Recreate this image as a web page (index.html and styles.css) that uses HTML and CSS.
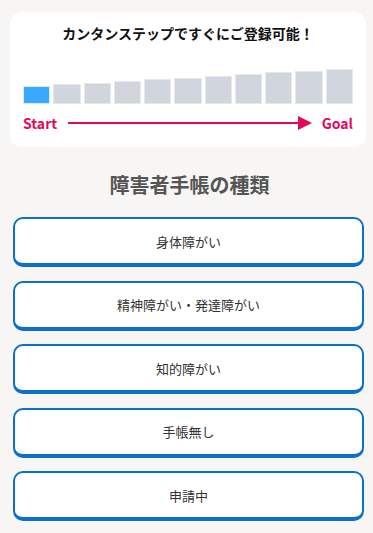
FILE: index.html
```html
<!DOCTYPE html>
<html lang="ja">
<head>
    <meta charset="UTF-8">
    <meta name="viewport" content="width=device-width, initial-scale=1.0">
    <title>障害者手帳の種類</title>
    <link rel="stylesheet" href="styles.css">
</head>
<body>
    <div class="page">
        <div class="steps">
            <p class="steps-title">カンタンステップですぐにご登録可能！</p>
            <div class="bars">
                <span class="bar active" style="height: 18px"></span>
                <span class="bar" style="height: 19.7px"></span>
                <span class="bar" style="height: 21.4px"></span>
                <span class="bar" style="height: 23.1px"></span>
                <span class="bar" style="height: 24.8px"></span>
                <span class="bar" style="height: 26.5px"></span>
                <span class="bar" style="height: 28.2px"></span>
                <span class="bar" style="height: 29.9px"></span>
                <span class="bar" style="height: 31.6px"></span>
                <span class="bar" style="height: 33.3px"></span>
                <span class="bar" style="height: 35px"></span>
            </div>
            <div class="progress">
                <span class="label">Start</span>
                <span class="arrow"></span>
                <span class="label">Goal</span>
            </div>
        </div>

        <h2 class="heading">障害者手帳の種類</h2>

        <div class="choices">
            <button class="choice">身体障がい</button>
            <button class="choice">精神障がい・発達障がい</button>
            <button class="choice">知的障がい</button>
            <button class="choice">手帳無し</button>
            <button class="choice">申請中</button>
        </div>
    </div>
</body>
</html>
```

FILE: styles.css
```css
* {
    margin: 0;
    padding: 0;
    box-sizing: border-box;
}
body {
    background: #f7f6f4;
    color: #333333;
    font-family: "Noto Sans CJK JP", "Noto Sans", sans-serif;
}
.page {
    padding: 12px 7px 0 10px;
}
.steps {
    background: #ffffff;
    border-radius: 12px;
    padding: 11px 13px 15px;
}
.steps-title {
    text-align: center;
    font-size: 14px;
    font-weight: bold;
    line-height: 20px;
    color: #111111;
}
.bars {
    display: flex;
    align-items: flex-end;
    gap: 3px;
    height: 35px;
    margin-top: 26px;
}
.bar {
    flex: 1;
    background: #d0d5de;
    border: 1px solid #e6e8ed;
}
.bar.active {
    background: #3aa8fd;
    border-color: #d8ecfb;
}
.progress {
    display: flex;
    align-items: center;
    margin-top: 10px;
    height: 18px;
}
.label {
    color: #e4075c;
    font-family: "Noto Sans CJK JP", sans-serif;
    font-weight: bold;
    font-size: 14px;
    line-height: 18px;
}
.arrow {
    flex: 1;
    position: relative;
    height: 2px;
    background: #e4075c;
    margin: 0 23px 0 11px;
}
.arrow::after {
    content: "";
    position: absolute;
    right: -13px;
    top: -6px;
    border-left: 14px solid #e4075c;
    border-top: 7px solid transparent;
    border-bottom: 7px solid transparent;
}
.heading {
    text-align: center;
    font-size: 20px;
    font-weight: bold;
    line-height: 28px;
    color: #555555;
    margin-top: 24px;
    padding-left: 3px;
}
.choices {
    display: flex;
    flex-direction: column;
    gap: 13.5px;
    margin-top: 18px;
    padding: 0 2px 0 3px;
}
.choice {
    height: 50px;
    background: #ffffff;
    border: 2px solid #0b70cb;
    border-bottom-width: 4px;
    border-radius: 10px;
    font-family: "Noto Sans CJK JP", sans-serif;
    font-size: 13px;
    color: #333333;
    cursor: pointer;
}
```
